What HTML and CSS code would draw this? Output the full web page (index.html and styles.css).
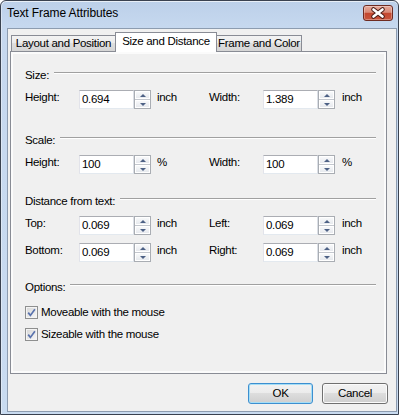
FILE: index.html
```html
<!DOCTYPE html>
<html>
<head>
<meta charset="utf-8">
<title>Text Frame Attributes</title>
<link rel="stylesheet" href="styles.css">
</head>
<body>
<div class="window">
  <div class="titlebar">
    <span class="title">Text Frame Attributes</span>
    <div class="close">
      <svg width="28" height="14" viewBox="0 0 28 14">
        <path d="M9.5 3.5 L18.5 10.5 M18.5 3.5 L9.5 10.5" stroke="#4b1c16" stroke-width="4.6" stroke-linecap="round" fill="none"/>
        <path d="M9.5 3.5 L18.5 10.5 M18.5 3.5 L9.5 10.5" stroke="#ffffff" stroke-width="2.6" stroke-linecap="round" fill="none"/>
      </svg>
    </div>
  </div>
  <div class="client">
    <div class="tabs">
      <div class="tab t1">Layout and Position</div>
      <div class="tab active">Size and Distance</div>
      <div class="tab t3">Frame and Color</div>
    </div>
    <div class="pane">
      <div class="ghead g-size"><span>Size:</span><i class="rule"></i></div>
      <div class="row r-first">
        <span class="lbl">Height:</span>
        <div class="spinbox"><span class="field">0.694</span><span class="spin"><span class="up"></span><span class="down"></span></span></div>
        <span class="unit">inch</span>
        <span class="lbl">Width:</span>
        <div class="spinbox"><span class="field">1.389</span><span class="spin"><span class="up"></span><span class="down"></span></span></div>
        <span class="unit u2">inch</span>
      </div>

      <div class="ghead g-scale"><span>Scale:</span><i class="rule"></i></div>
      <div class="row r-first">
        <span class="lbl">Height:</span>
        <div class="spinbox"><span class="field">100</span><span class="spin"><span class="up"></span><span class="down"></span></span></div>
        <span class="unit">%</span>
        <span class="lbl">Width:</span>
        <div class="spinbox"><span class="field">100</span><span class="spin"><span class="up"></span><span class="down"></span></span></div>
        <span class="unit u2">%</span>
      </div>

      <div class="ghead g-dist"><span>Distance from text:</span><i class="rule"></i></div>
      <div class="row r-first">
        <span class="lbl">Top:</span>
        <div class="spinbox"><span class="field">0.069</span><span class="spin"><span class="up"></span><span class="down"></span></span></div>
        <span class="unit">inch</span>
        <span class="lbl">Left:</span>
        <div class="spinbox"><span class="field">0.069</span><span class="spin"><span class="up"></span><span class="down"></span></span></div>
        <span class="unit u2">inch</span>
      </div>
      <div class="row r-next">
        <span class="lbl">Bottom:</span>
        <div class="spinbox"><span class="field">0.069</span><span class="spin"><span class="up"></span><span class="down"></span></span></div>
        <span class="unit">inch</span>
        <span class="lbl">Right:</span>
        <div class="spinbox"><span class="field">0.069</span><span class="spin"><span class="up"></span><span class="down"></span></span></div>
        <span class="unit u2">inch</span>
      </div>

      <div class="ghead g-opt"><span>Options:</span><i class="rule"></i></div>
      <div class="chk c-first">
        <span class="box"><svg width="11" height="11" viewBox="0 0 11 11"><path d="M2.2 5.6 L4.4 8.4 L8.9 2.2" stroke="#5a73ad" stroke-width="1.7" fill="none"/></svg></span>
        <span class="ctext">Moveable with the mouse</span>
      </div>
      <div class="chk c-next">
        <span class="box"><svg width="11" height="11" viewBox="0 0 11 11"><path d="M2.2 5.6 L4.4 8.4 L8.9 2.2" stroke="#5a73ad" stroke-width="1.7" fill="none"/></svg></span>
        <span class="ctext">Sizeable with the mouse</span>
      </div>
    </div>
    <div class="buttons">
      <div class="btn ok">OK</div>
      <div class="btn cancel">Cancel</div>
    </div>
  </div>
</div>
</body>
</html>
```

FILE: styles.css
```css
html, body {
  margin: 0;
  padding: 0;
}
body {
  font-family: "Liberation Sans", Arial, sans-serif;
  font-size: 11.5px;
  letter-spacing: -0.3px;
  color: #000;
  background: #fff;
}
.window {
  width: 399px;
  height: 415px;
  box-sizing: border-box;
  border: 1px solid #3a4250;
  border-radius: 6px 6px 0 0;
  background: linear-gradient(180deg, #bcd0e9 0px, #c6d8ef 26px, #c9dbf0 100%);
  box-shadow: inset 0 1px 0 rgba(255, 255, 255, 0.65), inset 1px 0 0 rgba(255, 255, 255, 0.4);
  display: flex;
  flex-direction: column;
  overflow: hidden;
}
.titlebar {
  height: 27px;
  flex: none;
  display: flex;
  align-items: flex-start;
  padding: 0 5px 0 6px;
}
.title {
  font-size: 12px;
  letter-spacing: -0.1px;
  line-height: 16px;
  padding-top: 4px;
}
.close {
  margin-left: auto;
  margin-top: 4px;
  width: 30px;
  height: 16px;
  box-sizing: border-box;
  border: 1px solid #6e2b22;
  border-radius: 3px;
  background: linear-gradient(180deg, #e7aa9b 0%, #d98a77 45%, #c4472f 52%, #c9563e 100%);
  box-shadow: inset 0 0 0 1px rgba(255, 255, 255, 0.3);
  display: flex;
  align-items: center;
  justify-content: center;
}
.close svg {
  display: block;
}
.client {
  flex: 1;
  min-height: 0;
  margin: 0 1px 2px 6px;
  border: 1px solid #8d9cb0;
  background: #f0f0f0;
  display: flex;
  flex-direction: column;
}
.tabs {
  flex: none;
  height: 22px;
  display: flex;
  align-items: flex-end;
  padding-left: 3px;
}
.tab {
  box-sizing: border-box;
  height: 16px;
  border: 1px solid #898c95;
  border-bottom: none;
  background: linear-gradient(180deg, #f3f3f3 0%, #ebebeb 50%, #dedede 50%, #d5d5d5 100%);
  text-align: center;
  line-height: 15px;
  white-space: nowrap;
}
.t1 {
  width: 105px;
  margin-right: -1px;
}
.active {
  position: relative;
  z-index: 1;
  width: 102px;
  height: 20px;
  margin-bottom: -1px;
  padding-top: 1px;
  background: #ffffff;
}
.t3 {
  width: 86px;
  margin-left: -1px;
}
.pane {
  flex: none;
  margin-left: 2px;
  width: 377px;
  height: 323px;
  box-sizing: border-box;
  border: 1px solid #898c95;
  background: #f0f0f0;
  box-shadow: inset 0 0 0 2px #fbfbfb;
  padding: 16px 10px 0 14px;
}
.ghead {
  display: flex;
  height: 14px;
  line-height: 15px;
}
.rule {
  flex: 1;
  height: 0;
  margin: 4px 0 0 5px;
  border-top: 1px solid #a0a0a0;
  border-bottom: 1px solid #ffffff;
}
.g-scale { margin-top: 24px; }
.g-dist { margin-top: 20px; }
.g-opt { margin-top: 18px; }
.row {
  display: grid;
  grid-template-columns: 54px 72px 58px 54px 72px auto;
  height: 19px;
  align-items: start;
}
.r-first { margin-top: 8px; }
.r-next { margin-top: 8px; }
.lbl, .unit {
  line-height: 15px;
}
.unit {
  padding-left: 6px;
}
.u2 {
  padding-left: 7px;
}
.spinbox {
  display: flex;
  width: 72px;
  height: 19px;
}
.field {
  box-sizing: border-box;
  width: 55px;
  height: 19px;
  border: 1px solid;
  border-color: #abadb3 #dbdfe6 #e3e9ef #e2e3ea;
  background: #ffffff;
  padding-left: 2px;
  line-height: 17px;
}
.spin {
  box-sizing: border-box;
  width: 17px;
  height: 19px;
  border: 1px solid #a9adb3;
  display: flex;
  flex-direction: column;
  background: #f4f5f7;
}
.up, .down {
  flex: 1;
  display: flex;
  align-items: center;
  justify-content: center;
  background: linear-gradient(180deg, #fafbfc 0%, #e4e7ec 100%);
  box-shadow: inset 0 0 0 1px #ffffff;
}
.up {
  border-bottom: 1px solid #c3c7ce;
}
.up::after {
  content: "";
  border-left: 3px solid transparent;
  border-right: 3px solid transparent;
  border-bottom: 3px solid #4d6185;
}
.down::after {
  content: "";
  border-left: 3px solid transparent;
  border-right: 3px solid transparent;
  border-top: 3px solid #4d6185;
}
.chk {
  display: flex;
  height: 14px;
  line-height: 15px;
}
.c-first { margin-top: 11px; }
.c-next { margin-top: 8px; }
.box {
  box-sizing: border-box;
  width: 13px;
  height: 13px;
  margin-top: 1px;
  border: 1px solid #8e8f8f;
  background: linear-gradient(135deg, #d6d6d6 0%, #f7f7f7 100%);
  box-shadow: inset 0 0 0 1px #f4f4f4;
  display: flex;
  align-items: center;
  justify-content: center;
}
.box svg {
  display: block;
}
.ctext {
  margin-left: 3px;
}
.buttons {
  flex: none;
  display: flex;
  justify-content: flex-end;
  gap: 9px;
  margin-top: 9px;
  padding-right: 8px;
}
.btn {
  box-sizing: border-box;
  width: 65px;
  height: 21px;
  border: 1px solid #707070;
  border-radius: 3px;
  background: linear-gradient(180deg, #f2f2f2 0%, #ebebeb 50%, #dddddd 50%, #cfcfcf 100%);
  box-shadow: inset 0 0 0 1px #fbfbfb;
  text-align: center;
  line-height: 19px;
}
.ok {
  border-color: #3c8fd0;
  box-shadow: inset 0 0 0 1px #a6def6;
}
.cancel {
  width: 66px;
}
```
